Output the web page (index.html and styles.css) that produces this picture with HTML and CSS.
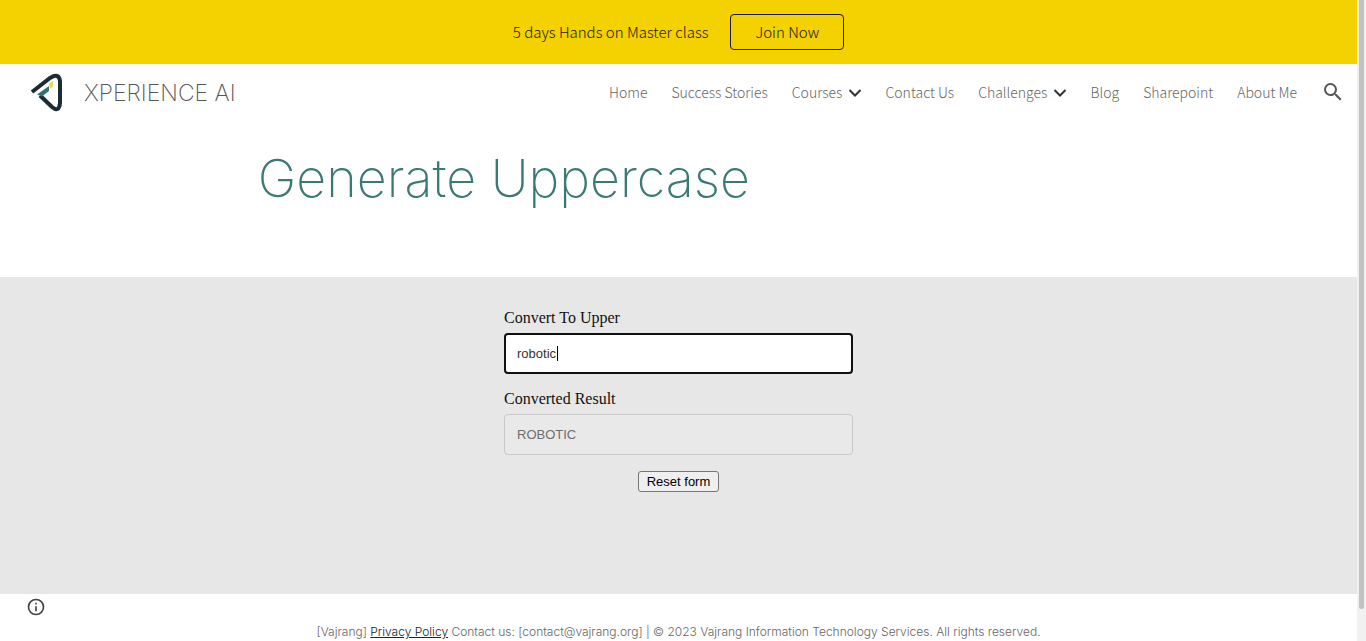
FILE: index.html
```html
<!DOCTYPE html>
<html lang="en">
<head>
<meta charset="utf-8">
<title>Generate Uppercase</title>
<link rel="stylesheet" href="styles.css">
</head>
<body>
<div class="page">
  <div class="banner">
    <span>5 days Hands on Master class</span>
    <a class="join" href="#">Join Now</a>
  </div>
  <header class="header">
    <a class="brand" href="#">
      <svg class="logo" viewBox="0 0 38 42" aria-hidden="true">
        <path d="M5 21 23 7Q32 1.500 33 10V32Q32 42 25 36L13 24.500" fill="none" stroke="#1d2b38" stroke-width="4"/>
        <path d="M10 23.500 22 15V20L15 25.500Z" fill="#2f7377"/>
        <path d="M22 13 26 10V15L23.500 18Z" fill="#e3d94c"/>
      </svg>
      <span>XPERIENCE AI</span>
    </a>
    <nav class="nav">
      <a href="#">Home</a>
      <a href="#">Success Stories</a>
      <a href="#">Courses <svg class="chev" viewBox="0 0 14 10" aria-hidden="true"><path d="M1.500 1 7 6.500 12.500 1"/></svg></a>
      <a href="#">Contact Us</a>
      <a href="#">Challenges <svg class="chev" viewBox="0 0 14 10" aria-hidden="true"><path d="M1.500 1 7 6.500 12.500 1"/></svg></a>
      <a href="#">Blog</a>
      <a href="#">Sharepoint</a>
      <a href="#">About Me</a>
      <button class="search" aria-label="Search"><svg viewBox="0 0 24 24" aria-hidden="true"><path d="M15.500 14h-.79l-.28-.27A6.470 6.470 0 0 0 16 9.500 6.500 6.500 0 1 0 9.500 16c1.610 0 3.090-.59 4.230-1.570l.27.28v.79l5 4.990L20.490 19l-4.990-5zm-6 0C7.010 14 5 11.990 5 9.500S7.010 5 9.500 5 14 7.010 14 9.500 11.990 14 9.500 14z"/></svg></button>
    </nav>
  </header>
  <main>
    <section class="title"><h1>Generate Uppercase</h1></section>
    <section class="band">
      <form class="form">
        <label for="src">Convert To Upper</label>
        <div class="field"><input id="src" class="active" type="text" value="robotic"><span class="caret"></span></div>
        <label for="out">Converted Result</label>
        <div class="field"><input id="out" type="text" value="ROBOTIC" disabled></div>
        <button class="reset" type="reset">Reset form</button>
      </form>
    </section>
  </main>
  <footer class="footer">
    <button class="info" aria-label="Page details"><svg viewBox="0 0 24 24" aria-hidden="true"><path d="M11 7h2v2h-2zm0 4h2v6h-2zm1-9a10 10 0 1 0 0 20 10 10 0 0 0 0-20zm0 18a8 8 0 1 1 0-16 8 8 0 0 1 0 16z"/></svg></button>
    <p>[Vajrang] <a href="#">Privacy Policy</a> Contact us: [contact@vajrang.org] | © 2023 Vajrang Information Technology Services. All rights reserved.</p>
  </footer>
</div>
<div class="track"><div class="thumb"></div></div>
</body>
</html>
```
FILE: styles.css
```css
* { box-sizing: border-box; }
body {
  margin: 0;
  height: 100vh;
  display: flex;
  overflow: hidden;
  background: #fff;
  font-family: "Noto Sans CJK JP", "Open Sans", sans-serif;
  font-weight: 300;
}
.page { flex: 1; min-width: 0; overflow: hidden; }
.track { width: 9px; padding: 0 2px; background: #f1f1f1; }
.thumb { height: 95%; background: #c1c1c1; border-radius: 0 0 3px 3px; }
a { color: inherit; text-decoration: none; }
button { font: inherit; }
.banner {
  display: flex;
  align-items: center;
  justify-content: center;
  gap: 22px;
  padding: 14px;
  background: #f4d100;
  color: #1d1818;
  font-size: 15px;
  line-height: 24px;
}
.join {
  padding: 5px 24px;
  border: 1px solid #1d1818;
  border-radius: 4px;
}
.header {
  display: flex;
  align-items: center;
  justify-content: space-between;
  padding: 7px 12px 7px 27px;
}
.brand {
  display: flex;
  align-items: center;
  gap: 19px;
  color: #555;
  font: 200 23px/32px Inter, sans-serif;
}
.brand span { padding-top: 2px; }
.logo { width: 38px; height: 42px; }
.nav {
  display: flex;
  align-items: center;
  gap: 24px;
  color: #666;
  font-size: 14px;
  line-height: 24px;
}
.chev { width: 14px; height: 10px; margin-left: 2px; vertical-align: middle; }
.chev path { fill: none; stroke: #333; stroke-width: 2; }
.search, .info { display: block; padding: 0; border: 0; background: none; }
.search svg { display: block; width: 24px; height: 24px; fill: #555; }
.title { padding: 24px 19% 63px; }
.title h1 {
  margin: 0;
  color: #3b7a74;
  font: 200 52px/70px Inter, sans-serif;
  white-space: nowrap;
}
.band { padding: 30px 16px 102px; background: #e7e7e7; }
.form {
  display: flex;
  flex-direction: column;
  max-width: 349px;
  margin: 0 auto;
  color: #111;
  font: 400 16px/22px "Liberation Serif", serif;
}
.field { position: relative; margin: 4px 0 14px; }
.field input {
  display: block;
  width: 100%;
  height: 41px;
  padding: 0 12px;
  border: 1px solid #c8c8c8;
  border-radius: 4px;
  background: #e9e9e9;
  color: #6d6d6d;
  font: 400 13px/20px "Liberation Sans", sans-serif;
}
.field .active {
  padding: 0 11px;
  border: 2px solid #101010;
  background: #fff;
  color: #333;
}
.caret { position: absolute; left: 53px; top: 13px; width: 1px; height: 15px; background: #000; }
.reset {
  align-self: center;
  margin-top: 2px;
  padding: 0 8px;
  border: 1px solid #767676;
  border-radius: 3px;
  background: #efefef;
  color: #000;
  font: 400 13px/19px "Liberation Sans", sans-serif;
}
.footer { padding: 3px 26px 16px; }
.info svg { display: block; width: 20px; height: 20px; fill: #444; }
.footer p {
  margin: 6px 0 0;
  color: #666;
  font: 300 12px/18px Inter, sans-serif;
  text-align: center;
}
.footer a { color: #222; text-decoration: underline; }
```
